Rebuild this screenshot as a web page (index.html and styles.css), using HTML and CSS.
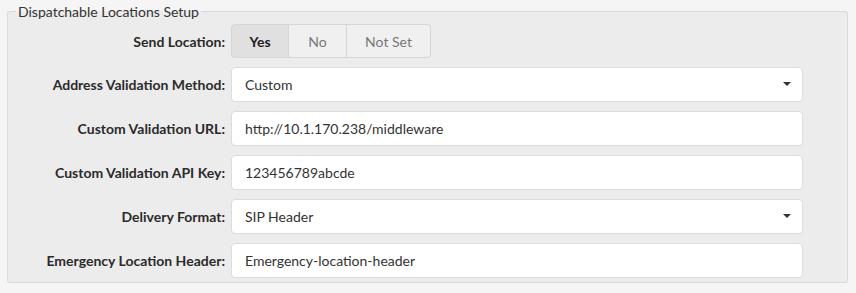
FILE: index.html
```html
<!DOCTYPE html>
<html lang="en">

<head>
    <meta charset="UTF-8">
    <meta name="viewport" content="width=device-width, initial-scale=1.0">
    <title>Dispatchable Locations Setup</title>
    <link rel="stylesheet" href="styles.css">
</head>

<body>
    <fieldset class="setup">
        <legend>Dispatchable Locations Setup</legend>

        <div class="form-grid">
            <label class="field-label">Send Location:</label>
            <div class="toggle-group">
                <button class="toggle active">Yes</button>
                <button class="toggle">No</button>
                <button class="toggle wide">Not Set</button>
            </div>

            <label class="field-label">Address Validation Method:</label>
            <div class="select-wrap">
                <select class="field-input">
                    <option>Custom</option>
                </select>
            </div>

            <label class="field-label">Custom Validation URL:</label>
            <input class="field-input" type="text" value="http://10.1.170.238/middleware">

            <label class="field-label">Custom Validation API Key:</label>
            <input class="field-input" type="text" value="123456789abcde">

            <label class="field-label">Delivery Format:</label>
            <div class="select-wrap">
                <select class="field-input">
                    <option>SIP Header</option>
                </select>
            </div>

            <label class="field-label">Emergency Location Header:</label>
            <input class="field-input" type="text" value="Emergency-location-header">
        </div>
    </fieldset>
</body>
</html>
```

FILE: styles.css
```css
body {
    margin: 0;
    padding: 3px 8px 0 7px;
    background-color: #f5f5f5;
    font-family: Lato, "Open Sans", sans-serif;
    color: #333;
}

.setup {
    margin: 0;
    padding: 4px 42px 4px 8px;
    border: 1px solid #d9d9d9;
    border-radius: 3px;
    background-color: #ececec;
}

.setup legend {
    padding: 0 2px;
    font-size: 14px;
    color: #333;
}

.form-grid {
    display: grid;
    grid-template-columns: 209px 572px;
    column-gap: 6px;
    row-gap: 9px;
    align-items: center;
}

.field-label {
    text-align: right;
    font-size: 14px;
    font-weight: bold;
    color: #2b2b2b;
}

.toggle-group {
    display: flex;
    height: 34px;
}

.toggle {
    width: 58px;
    height: 34px;
    margin: 0;
    padding: 0;
    background-color: #f0f0f0;
    border: 1px solid #d6d6d6;
    border-left: none;
    font-family: inherit;
    font-size: 14px;
    color: #777;
}

.toggle:first-child {
    border-left: 1px solid #d6d6d6;
    border-radius: 4px 0 0 4px;
}

.toggle:last-child {
    border-radius: 0 4px 4px 0;
}

.toggle.wide {
    width: 84px;
}

.toggle.active {
    background-color: #e0e0e0;
    font-weight: bold;
    color: #222;
}

.field-input {
    box-sizing: border-box;
    width: 100%;
    height: 35px;
    margin: 0;
    padding: 0 13px;
    background-color: #fff;
    border: 1px solid #dcdcdc;
    border-radius: 4px;
    font-family: inherit;
    font-size: 14px;
    color: #333;
    outline: none;
}

select.field-input {
    appearance: none;
    -webkit-appearance: none;
}

.select-wrap {
    position: relative;
}

.select-wrap::after {
    content: "";
    position: absolute;
    right: 12px;
    top: 15px;
    border-left: 4px solid transparent;
    border-right: 4px solid transparent;
    border-top: 4px solid #333;
    pointer-events: none;
}
```
